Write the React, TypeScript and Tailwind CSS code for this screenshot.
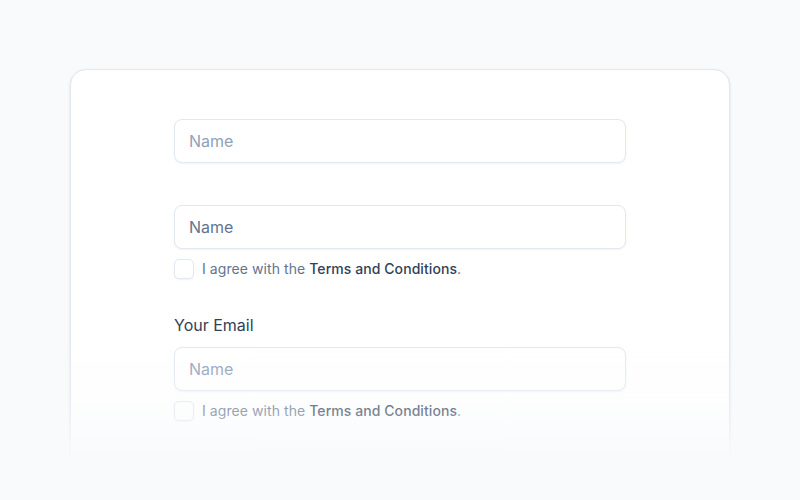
import React from "react";

const Agree = () => (
  <label className="flex items-center gap-2 text-sm">
    <span className="h-5 w-5 shrink-0 rounded-[5px] border border-slate-200 bg-white shadow-xs" />
    <span className="tracking-[0.005em] text-slate-500">
      I agree with the{" "}
      <span className="font-medium text-slate-700">Terms and Conditions</span>.
    </span>
  </label>
);

const Field = ({ value }: { value?: string }) => (
  <input
    readOnly
    value={value}
    placeholder="Name"
    className="h-11 w-full rounded-lg border border-slate-200 bg-white px-[14px] text-base text-slate-500 shadow-xs placeholder:text-slate-400 outline-none"
  />
);

const App = () => {
  return (
    <div
      className="relative h-[500px] w-[800px] overflow-hidden bg-slate-50 px-[70px] pt-[69px]"
      style={{ fontFamily: "Inter, 'Noto Sans', sans-serif" }}
    >
      <div className="h-[520px] rounded-2xl border border-slate-200 bg-white shadow-sm">
        <div className="mx-auto flex w-[452px] flex-col pt-[49px]">
          <Field />
          <div className="mt-[42px] flex flex-col gap-[10px]">
            <Field value="Name" />
            <Agree />
          </div>
          <div className="mt-[34px] flex flex-col">
            <span className="text-base leading-6 text-slate-700">Your Email</span>
            <div className="mt-[10px]">
              <Field />
            </div>
            <div className="mt-[10px]">
              <Agree />
            </div>
          </div>
        </div>
      </div>
      <div className="pointer-events-none absolute inset-x-0 bottom-0 h-[160px] bg-gradient-to-b from-slate-50/0 via-slate-50/35 via-45% to-slate-50 to-75%" />
    </div>
  );
};

export default App;
